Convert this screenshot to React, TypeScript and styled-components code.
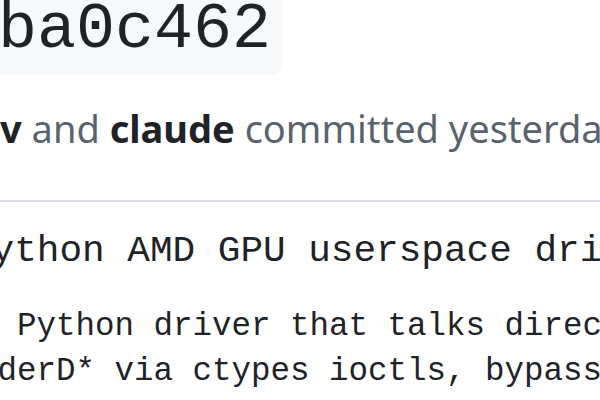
import React from "react";
import styled, { createGlobalStyle } from "styled-components";

const GlobalStyle = createGlobalStyle`
  html, body {
    margin: 0;
    padding: 0;
    background: #ffffff;
    overflow: hidden;
  }
  body {
    width: 600px;
    height: 400px;
  }
`;

const Page = styled.main`
  width: 720px;
  margin: -14px 0 0 -14px;
  display: flex;
  flex-direction: column;
  align-items: flex-start;
  color: #1f2328;
`;

const Header = styled.div`
  display: flex;
  align-items: flex-end;
`;

const HashBox = styled.code`
  display: inline-block;
  font-family: "Liberation Mono", monospace;
  font-size: 65px;
  line-height: 64px;
  padding: 12px 11px 13px 12px;
  background: #f6f8fa;
  border-radius: 12px;
  color: #1f2328;
`;

const AuthorLine = styled.p`
  margin: 28px 0 47px 14px;
  font-family: "Noto Sans", "Open Sans", sans-serif;
  font-size: 38px;
  line-height: 50px;
  color: #59636e;
  white-space: nowrap;
`;

const Author = styled.strong`
  font-weight: 700;
  color: #1f2328;
`;

const Divider = styled.hr`
  align-self: stretch;
  margin: 0;
  border: 0;
  height: 2px;
  background: #d8dee4;
`;

const Title = styled.h1`
  margin: 27px 0 0 -17px;
  font-family: "Liberation Mono", monospace;
  font-size: 37.7px;
  line-height: 45px;
  font-weight: 400;
  white-space: nowrap;
  color: #1f2328;
`;

const Description = styled.pre`
  margin: 30px 0 0 -47px;
  font-family: "Liberation Mono", monospace;
  font-size: 32.5px;
  line-height: 45px;
  white-space: pre;
  color: #1f2328;
`;

export default function App() {
  return (
    <>
      <GlobalStyle />
      <Page>
        <Header>
          <HashBox>ba0c462</HashBox>
        </Header>
        <AuthorLine>
          <Author>v</Author> and <Author>claude</Author> committed yesterday
        </AuthorLine>
        <Divider />
        <Title>Python AMD GPU userspace driver</Title>
        <Description>
          {"Add Python driver that talks directly to /dev/kfd and /dev/dri/\nrenderD* via ctypes ioctls, bypassing ROCm entirely."}
        </Description>
      </Page>
    </>
  );
}
